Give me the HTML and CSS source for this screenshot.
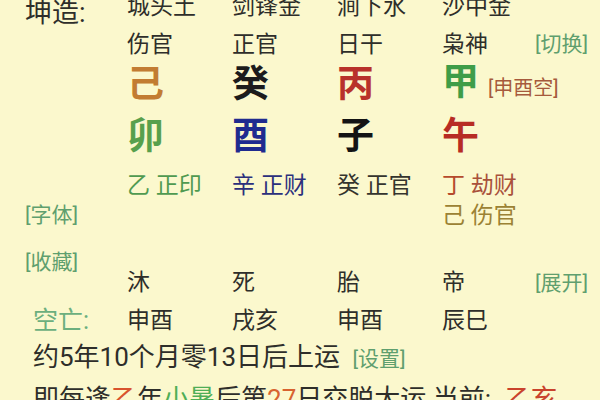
FILE: index.html
```html
<!DOCTYPE html>
<html lang="zh-CN">
<head>
    <meta charset="UTF-8">
    <meta name="viewport" content="width=device-width, initial-scale=1.0">
    <title>排盘</title>
    <link rel="stylesheet" href="styles.css">
</head>
<body>
    <main class="chart">
        <div class="row r-nayin">
            <span class="title">坤造:</span>
            <span class="nayin">城头土</span>
            <span class="nayin">剑锋金</span>
            <span class="nayin">涧下水</span>
            <span class="nayin">沙中金</span>
        </div>
        <div class="row r-shishen">
            <span></span>
            <span>伤官</span>
            <span>正官</span>
            <span>日干</span>
            <span>枭神</span>
            <span class="link">[切换]</span>
        </div>
        <div class="row r-gan">
            <span></span>
            <span class="big c-ji">己</span>
            <span class="big c-gui">癸</span>
            <span class="big c-bing">丙</span>
            <span class="big c-jia">甲<span class="kong">[申酉空]</span></span>
        </div>
        <div class="row r-zhi">
            <span></span>
            <span class="big c-mao">卯</span>
            <span class="big c-you">酉</span>
            <span class="big c-zi">子</span>
            <span class="big c-wu">午</span>
        </div>
        <div class="row r-cang">
            <span></span>
            <span class="h-green">乙 正印</span>
            <span class="h-blue">辛 正财</span>
            <span class="h-dark">癸 正官</span>
            <span><span class="h-red">丁</span> <span class="h-brown">劫财</span></span>
        </div>
        <div class="row r-extra">
            <span class="link">[字体]</span>
            <span></span>
            <span></span>
            <span></span>
            <span class="h-olive">己 伤官</span>
        </div>
        <div class="row r-cs">
            <span class="link save">[收藏]</span>
            <span>沐</span>
            <span>死</span>
            <span>胎</span>
            <span>帝</span>
            <span class="link">[展开]</span>
        </div>
        <div class="row r-kong">
            <span class="kong-label">空亡:</span>
            <span>申酉</span>
            <span>戌亥</span>
            <span>申酉</span>
            <span>辰巳</span>
        </div>
        <p class="line yun">约5年10个月零13日后上运 <span class="link small">[设置]</span></p>
        <p class="line jiao">即每逢<span class="t-red">乙</span>年<span class="t-green">小暑</span>后第<span class="t-orange">27</span>日交脱大运 当前:<span class="t-now">乙亥</span></p>
    </main>
</body>
</html>
```

FILE: styles.css
```css
body {
    margin: 0;
    background-color: #fbf8cd;
    font-family: Roboto, "Noto Sans CJK SC", sans-serif;
    color: #2e2e2a;
    overflow: hidden;
}
.chart {
    padding-left: 25px;
}
.row {
    display: grid;
    grid-template-columns: 102px 105px 105px 105px 93px 1fr;
    align-items: center;
    font-size: 23px;
    white-space: nowrap;
}
.r-nayin {
    height: 22px;
    align-items: start;
}
.nayin {
    line-height: 14px;
}
.title {
    font-size: 27px;
    line-height: 14px;
    padding-top: 6px;
}
.r-shishen {
    height: 40px;
}
.r-gan {
    height: 46px;
}
.r-zhi {
    height: 58px;
}
.r-cang {
    height: 30px;
}
.r-extra {
    height: 34px;
}
.r-cs {
    margin-top: 21px;
    height: 43px;
    align-items: end;
    line-height: 22px;
}
.r-cs .save {
    align-self: start;
}
.r-kong {
    height: 48px;
}
.kong-label {
    color: #6caf7e;
    font-size: 25px;
    padding-left: 8px;
}
.link {
    color: #5f9f6e;
    font-size: 21px;
}
.big {
    font-size: 37px;
    font-weight: bold;
    line-height: 40px;
}
.kong {
    font-size: 20px;
    font-weight: normal;
    color: #a65a3c;
    margin-left: 9px;
}
.c-ji { color: #c27c32; }
.c-gui { color: #1c1c1c; }
.c-bing { color: #b8322b; }
.c-jia { color: #3f9d48; }
.c-mao { color: #58a04c; }
.c-you { color: #1f2b8f; }
.c-zi { color: #141414; }
.c-wu { color: #b72c24; }
.h-green { color: #4f9a50; }
.h-blue { color: #2b307c; }
.h-dark { color: #34342e; }
.h-red { color: #b54a2c; }
.h-brown { color: #a9513b; }
.h-olive { color: #9b8234; }
.line {
    margin: 0;
    padding-left: 8px;
    font-size: 26px;
    white-space: nowrap;
}
.yun {
    line-height: 30px;
}
.small {
    font-size: 21px;
    margin-left: 6px;
}
.jiao {
    line-height: 50px;
}
.t-red { color: #d8532d; }
.t-green { color: #4fae56; }
.t-orange { color: #d8632f; }
.t-now {
    color: #c9432c;
    margin-left: 14px;
}
```
